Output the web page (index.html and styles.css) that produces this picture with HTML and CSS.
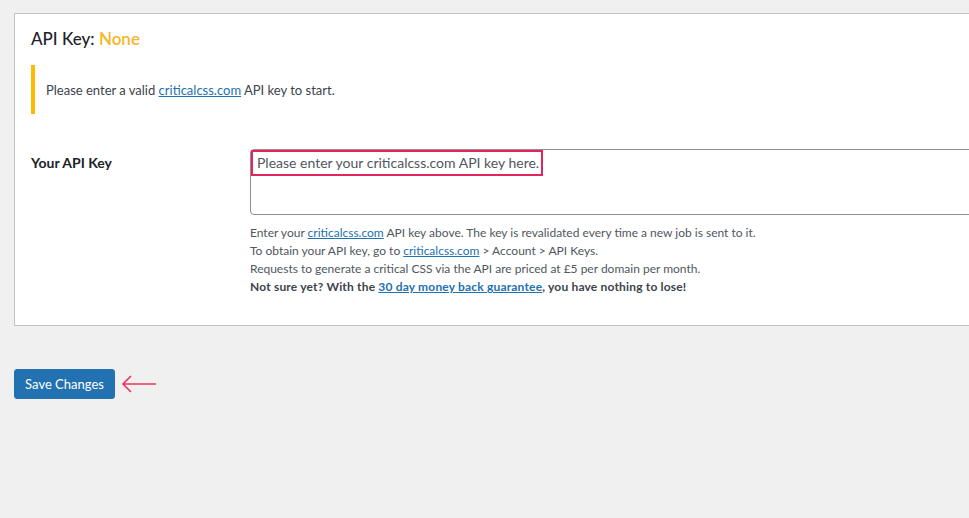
FILE: index.html
```html
<!DOCTYPE html>
<html>
<head>
<meta charset="utf-8">
<link rel="stylesheet" href="styles.css">
</head>
<body>
<div class="wrap">
  <div class="card">
    <h2 class="title">API Key: <span class="none">None</span></h2>
    <div class="notice">
      <p>Please enter a valid <a href="#">criticalcss.com</a> API key to start.</p>
    </div>
    <div class="row">
      <div class="label">Your API Key</div>
      <div class="field">
        <div class="textarea">
          <span class="placeholder">Please enter your criticalcss.com API key here.</span>
        </div>
        <p class="desc">
          Enter your <a href="#">criticalcss.com</a> API key above. The key is revalidated every time a new job is sent to it.<br>
          To obtain your API key, go to <a href="#">criticalcss.com</a> &gt; Account &gt; API Keys.<br>
          Requests to generate a critical CSS via the API are priced at £5 per domain per month.<br>
          <strong>Not sure yet? With the <a href="#">30 day money back guarantee</a>, you have nothing to lose!</strong>
        </p>
      </div>
    </div>
  </div>
  <div class="actions">
    <button class="btn">Save Changes</button>
    <svg class="arrow" width="36" height="20" viewBox="0 0 36 20"><path d="M35 10H2M10 2L2 10L10 18" fill="none" stroke="#e8345f" stroke-width="1.6"/></svg>
  </div>
</div>
</body>
</html>
```
FILE: styles.css
```css
html, body { margin: 0; padding: 0; overflow: hidden; }
body {
  background: #f0f0f1;
  font-family: Lato, "Noto Sans", sans-serif;
  color: #1d2327;
  font-size: 13px;
  width: 969px;
  height: 518px;
}
.wrap { padding: 13px 0 0 14px; }
.card {
  width: 1000px;
  background: #fff;
  border: 1px solid #c3c4c7;
  padding: 0 16px 0 16px;
  height: 313px;
  box-sizing: border-box;
}
.title {
  margin: 13px 0 0;
  font-size: 17px;
  font-weight: 500;
  line-height: 24px;
  color: #1d2327;
}
.none { color: #f8b62a; font-weight: 600; }
.notice {
  margin-top: 14px;
  border-left: 4px solid #ffb900;
  height: 49px;
  display: flex;
  align-items: center;
  padding-left: 11px;
  padding-top: 1px;
  box-sizing: border-box;
}
.notice p { margin: 0; font-size: 13px; color: #3c434a; }
a { color: #2271b1; text-decoration: underline; }
.row { display: flex; margin-top: 35px; }
.label {
  width: 219px;
  flex: none;
  font-weight: 700;
  font-size: 14px;
  padding-top: 4px;
  line-height: 20px;
}
.field { flex: 1; }
.textarea {
  width: 760px;
  height: 66px;
  border: 1px solid #8c8f94;
  border-radius: 4px;
  box-sizing: border-box;
  padding: 0;
}
.placeholder {
  display: inline-block;
  border: 2px solid #e2265b;
  font-size: 14px;
  color: #50575e;
  padding: 1px 2px 1px 4px;
  line-height: 20px;
}
.desc {
  margin: 9px 0 0;
  font-size: 12px;
  line-height: 18px;
  color: #50575e;
}
.desc strong { font-weight: 700; color: #3c434a; letter-spacing: 0.18px; }
.actions {
  display: flex;
  align-items: center;
  margin-top: 43px;
  gap: 6px;
}
.btn {
  background: #2271b1;
  color: #fff;
  border: 1px solid #2271b1;
  border-radius: 3px;
  font-family: inherit;
  font-size: 13px;
  height: 30px;
  width: 101px;
  padding: 0;
}
.arrow { display: block; }
```
